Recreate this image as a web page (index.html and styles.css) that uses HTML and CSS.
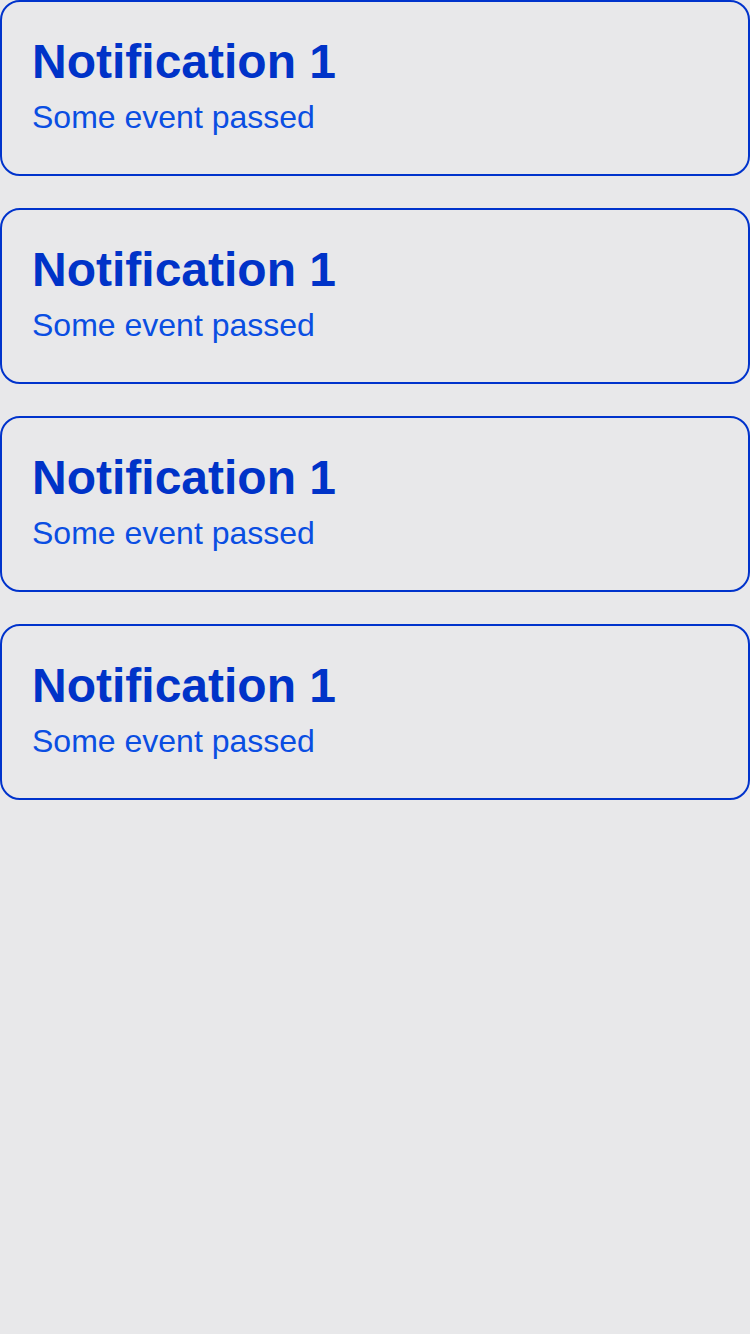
FILE: index.html
```html
<!DOCTYPE html>
<html>
<head>
<meta charset="utf-8">
<link rel="stylesheet" href="styles.css">
</head>
<body>
<div class="list">
  <div class="card">
    <div class="title">Notification 1</div>
    <div class="subtitle">Some event passed</div>
  </div>
  <div class="card">
    <div class="title">Notification 1</div>
    <div class="subtitle">Some event passed</div>
  </div>
  <div class="card">
    <div class="title">Notification 1</div>
    <div class="subtitle">Some event passed</div>
  </div>
  <div class="card">
    <div class="title">Notification 1</div>
    <div class="subtitle">Some event passed</div>
  </div>
</div>
</body>
</html>
```
FILE: styles.css
```css
html, body {
  margin: 0;
  padding: 0;
  background: #e8e8ea;
  font-family: "Liberation Sans", Arial, sans-serif;
}
.list {
  display: flex;
  flex-direction: column;
  gap: 32px;
}
.card {
  box-sizing: border-box;
  height: 176px;
  border: 2px solid #0033cc;
  border-radius: 20px;
  padding: 32px 30px 0 30px;
  display: flex;
  flex-direction: column;
}
.title {
  font-size: 48px;
  font-weight: bold;
  line-height: 55px;
  color: #0033c8;
}
.subtitle {
  margin-top: 10px;
  font-size: 32px;
  line-height: 37px;
  color: #0a4ee2;
}
```
